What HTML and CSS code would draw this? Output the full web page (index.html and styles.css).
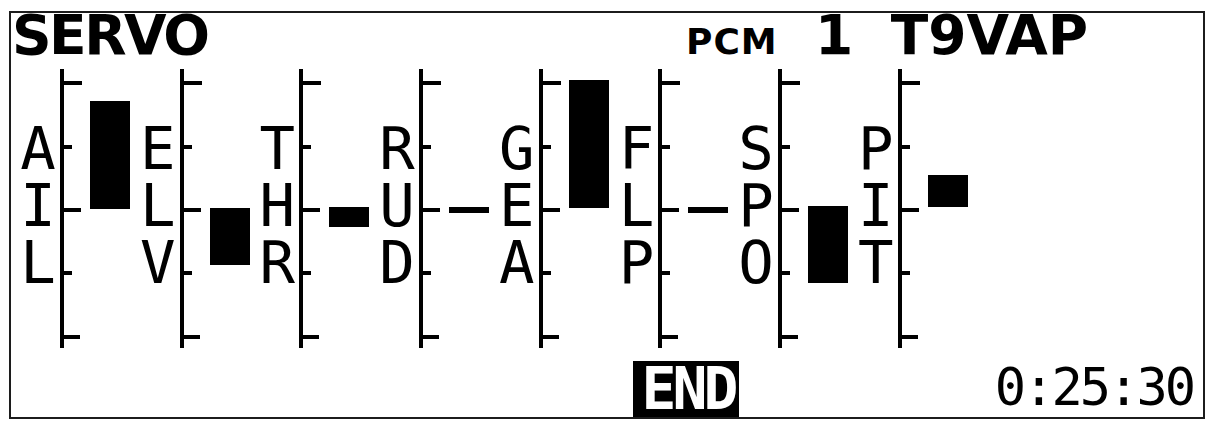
FILE: index.html
```html
<!DOCTYPE html>
<html>
<head>
<meta charset="utf-8">
<link rel="stylesheet" href="styles.css">
</head>
<body>
<div class="screen">
  <div class="header">
    <span class="title">SERVO</span>
    <span class="mode">PCM</span>
    <span class="num">1</span>
    <span class="model">T9VAP</span>
  </div>
  <div class="chart">
    <div class="channel">
      <div class="label">A<br>I<br>L</div>
      <svg class="scale" viewBox="0 0 28 279" width="28" height="279"><path d="M6 0V279M6 14H26M6 78H16M6 141H25M6 204H16M6 268H24"/></svg>
      <div class="track"><div class="bar" style="margin-top:32px;height:108px"></div></div>
    </div>
    <div class="channel">
      <div class="label">E<br>L<br>V</div>
      <svg class="scale" viewBox="0 0 28 279" width="28" height="279"><path d="M6 0V279M6 14H26M6 78H16M6 141H25M6 204H16M6 268H24"/></svg>
      <div class="track"><div class="bar" style="margin-top:139px;height:57px"></div></div>
    </div>
    <div class="channel">
      <div class="label">T<br>H<br>R</div>
      <svg class="scale" viewBox="0 0 28 279" width="28" height="279"><path d="M6 0V279M6 14H26M6 78H16M6 141H25M6 204H16M6 268H24"/></svg>
      <div class="track"><div class="bar" style="margin-top:138px;height:20px"></div></div>
    </div>
    <div class="channel">
      <div class="label">R<br>U<br>D</div>
      <svg class="scale" viewBox="0 0 28 279" width="28" height="279"><path d="M6 0V279M6 14H26M6 78H16M6 141H25M6 204H16M6 268H24"/></svg>
      <div class="track"><div class="bar" style="margin-top:138px;height:6px"></div></div>
    </div>
    <div class="channel">
      <div class="label">G<br>E<br>A</div>
      <svg class="scale" viewBox="0 0 28 279" width="28" height="279"><path d="M6 0V279M6 14H26M6 78H16M6 141H25M6 204H16M6 268H24"/></svg>
      <div class="track"><div class="bar" style="margin-top:11px;height:128px"></div></div>
    </div>
    <div class="channel">
      <div class="label">F<br>L<br>P</div>
      <svg class="scale" viewBox="0 0 28 279" width="28" height="279"><path d="M6 0V279M6 14H26M6 78H16M6 141H25M6 204H16M6 268H24"/></svg>
      <div class="track"><div class="bar" style="margin-top:138px;height:6px"></div></div>
    </div>
    <div class="channel">
      <div class="label">S<br>P<br>O</div>
      <svg class="scale" viewBox="0 0 28 279" width="28" height="279"><path d="M6 0V279M6 14H26M6 78H16M6 141H25M6 204H16M6 268H24"/></svg>
      <div class="track"><div class="bar" style="margin-top:137px;height:77px"></div></div>
    </div>
    <div class="channel">
      <div class="label">P<br>I<br>T</div>
      <svg class="scale" viewBox="0 0 28 279" width="28" height="279"><path d="M6 0V279M6 14H26M6 78H16M6 141H25M6 204H16M6 268H24"/></svg>
      <div class="track"><div class="bar" style="margin-top:106px;height:32px"></div></div>
    </div>
  </div>
  <div class="footer">
    <div class="end">END</div>
    <div class="timer">0:25:30</div>
  </div>
</div>
</body>
</html>
```

FILE: styles.css
```css
html, body {
  margin: 0;
  padding: 0;
  background: #ffffff;
}

.screen {
  margin: 11px 0 0 9px;
  width: 1196px;
  height: 408px;
  box-sizing: border-box;
  border: 2px solid #1c1c1c;
  display: flex;
  flex-direction: column;
  color: #000;
  font-family: "DejaVu Sans", sans-serif;
}

.header {
  flex: 0 0 56px;
  display: flex;
  align-items: baseline;
}

.title {
  flex: 0 0 674px;
  margin-left: 1px;
  font-weight: bold;
  font-size: 55px;
  line-height: 44px;
  letter-spacing: -2.5px;
}

.mode {
  flex: 0 0 90px;
  font-weight: bold;
  font-size: 36px;
  line-height: 44px;
  letter-spacing: 1px;
}

.num {
  flex: 0 0 113px;
  font-weight: bold;
  font-size: 55px;
  line-height: 44px;
  text-align: center;
}

.model {
  font-weight: bold;
  font-size: 55px;
  line-height: 44px;
  letter-spacing: 0;
}

.chart {
  flex: 0 0 279px;
  display: flex;
  padding-left: 9px;
}

.channel {
  flex: 0 0 119.7px;
  display: flex;
}

.label {
  flex: 0 0 36px;
  padding-top: 51px;
  font-family: "DejaVu Sans Mono", monospace;
  font-size: 59px;
  line-height: 57px;
  text-align: center;
}

.scale {
  flex: 0 0 28px;
  display: block;
}

.scale path {
  stroke: #000;
  stroke-width: 4;
  fill: none;
}

.track {
  flex: 1;
  padding-left: 6px;
}

.bar {
  width: 40px;
  background: #000;
}

.footer {
  flex: 1;
  display: flex;
  align-items: flex-end;
}

.end {
  margin-left: 622px;
  width: 106px;
  height: 56px;
  padding-left: 4px;
  box-sizing: border-box;
  background: #000;
  color: #fff;
  text-align: center;
  font-family: "DejaVu Sans Mono", monospace;
  font-weight: bold;
  font-size: 58px;
  line-height: 56px;
  letter-spacing: -4px;
}

.timer {
  margin-left: auto;
  padding: 0 10px 4px 0;
  font-family: "DejaVu Sans Mono", monospace;
  font-variant-numeric: slashed-zero;
  font-size: 52px;
  line-height: 52px;
  letter-spacing: -3px;
}
```
